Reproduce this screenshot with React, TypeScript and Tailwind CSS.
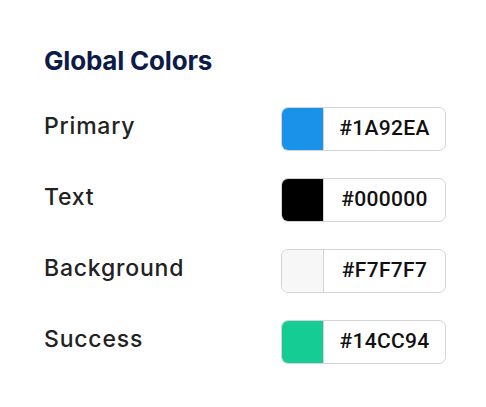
import React from "react";

const colors = [
  { name: "Primary", hex: "#1A92EA", bg: "bg-[#1A92EA]" },
  { name: "Text", hex: "#000000", bg: "bg-[#000000]" },
  { name: "Background", hex: "#F7F7F7", bg: "bg-[#F7F7F7]" },
  { name: "Success", hex: "#14CC94", bg: "bg-[#14CC94]" },
];

export default function App() {
  return (
    <div className="w-[486px] h-[407px] bg-white pl-[44px] pr-[40px] pt-[45px]">
      <h2 className="text-[26px] leading-[32px] font-bold text-[#0d1b48] tracking-[-0.2px] [font-family:Inter,'Noto_Sans',sans-serif]">
        Global Colors
      </h2>
      <div className="mt-[30px] flex flex-col gap-[27px]">
        {colors.map((c) => (
          <div key={c.name} className="flex items-center justify-between h-[44px]">
            <span className="text-[23px] leading-[28px] text-[#222222] font-medium tracking-[0.8px] -mt-[6px] [font-family:Inter,'Noto_Sans',sans-serif]">
              {c.name}
            </span>
            <div className="flex w-[165px] h-[44px] rounded-[7px] border-[1.5px] border-[#d4d4d4] overflow-hidden bg-white">
              <div className={`w-[42px] h-full ${c.bg} border-r-[1.5px] border-[#d4d4d4]`} />
              <div className="flex-1 flex items-center justify-center text-[21px] font-medium tracking-[0.3px] text-[#111111] [font-family:Roboto,sans-serif]">
                {c.hex}
              </div>
            </div>
          </div>
        ))}
      </div>
    </div>
  );
}
